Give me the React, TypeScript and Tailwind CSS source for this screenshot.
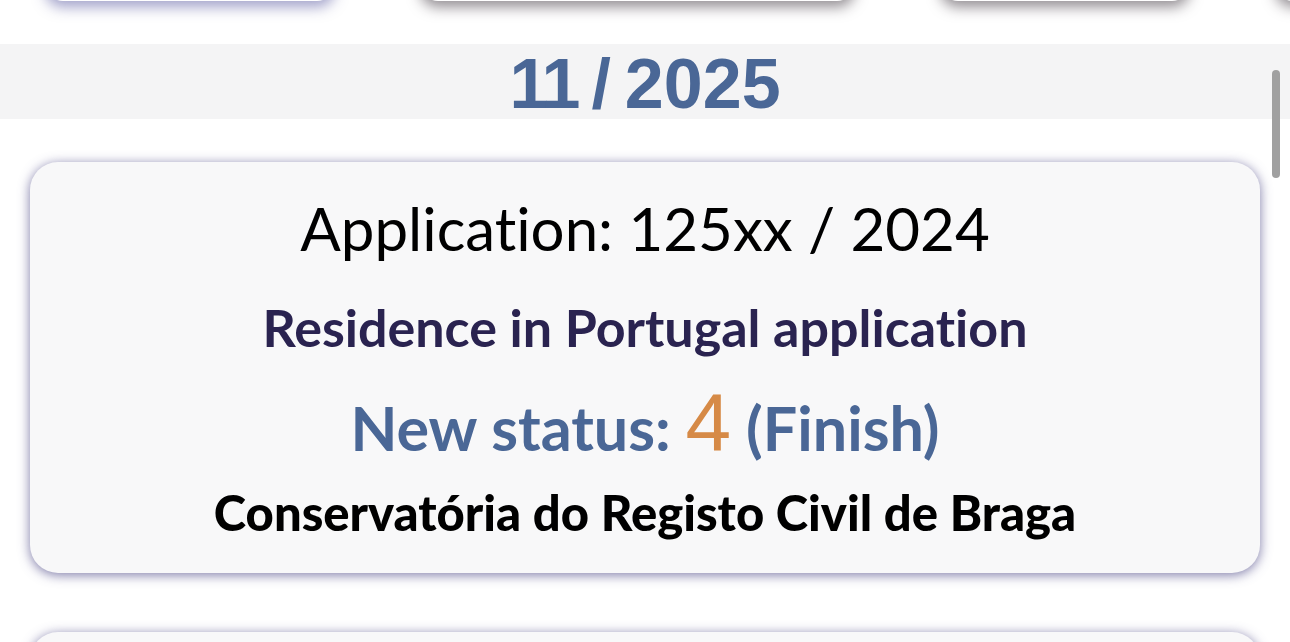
import React from "react";

const tabs = [
  { w: "w-[290px]", shadow: "shadow-[0_6px_14px_rgba(70,70,150,0.5)]" },
  { w: "w-[435px]", shadow: "shadow-[0_6px_14px_rgba(40,30,40,0.5)]" },
  { w: "w-[250px]", shadow: "shadow-[0_6px_14px_rgba(40,30,40,0.5)]" },
  { w: "w-[120px]", shadow: "shadow-[0_6px_14px_rgba(40,30,40,0.5)]" },
];

const arial = { fontFamily: "'Liberation Sans', Arial, sans-serif" };

export default function App() {
  return (
    <div
      className="relative h-[642px] w-[1290px] overflow-hidden bg-white [font-variant-ligatures:none]"
      style={{ fontFamily: "Lato, 'Noto Sans', sans-serif" }}
    >
      {/* top tab buttons (scrolled off) */}
      <div className="flex -mt-[42px] h-[43px] pl-[45px] gap-[85px]">
        {tabs.map((t, i) => (
          <div key={i} className={`${t.w} shrink-0 h-full rounded-[18px] bg-white ${t.shadow}`} />
        ))}
      </div>

      {/* month header */}
      <div className="mt-[43px] h-[75px] flex items-center justify-center bg-[#f4f4f5]" style={arial}>
        <div className="flex items-baseline gap-[14px] font-bold text-[70px] leading-none text-[#4a6796] pt-[4px]">
          <span className="tracking-[-3px]">11</span>
          <span>/</span>
          <span>2025</span>
        </div>
      </div>

      {/* card */}
      <div className="mx-[30px] mt-[43px] h-[411px] rounded-[28px] bg-[#f8f8f9] shadow-[0_2px_12px_rgba(70,65,130,0.7)] flex flex-col items-center">
        <p className="mt-[36px] text-[60px] leading-[60px] text-black font-normal">Application: 125xx / 2024</p>
        <p className="mt-[43px] text-[52px] leading-[52px] font-bold text-[#2a2350]">Residence in Portugal application</p>
        <div className="mt-[40px] text-[61px] leading-[60px] font-bold text-[#4a6796] flex items-baseline">
          <span>New status:&nbsp;</span>
          <span className="text-[82px] font-normal text-[#d68a47]" style={arial}>4</span>
          <span>&nbsp;(Finish)</span>
        </div>
        <p className="mt-[30px] text-[49px] leading-[49px] font-black text-black">Conservatória do Registo Civil de Braga</p>
      </div>

      {/* next card */}
      <div className="mx-[30px] mt-[59px] h-[200px] rounded-[28px] bg-[#f8f8f9] shadow-[0_2px_12px_rgba(70,65,130,0.7)]" />

      {/* scrollbar */}
      <div className="absolute right-[10px] top-[70px] w-[8px] h-[108px] rounded-full bg-[#a0a0a0]" />
    </div>
  );
}
